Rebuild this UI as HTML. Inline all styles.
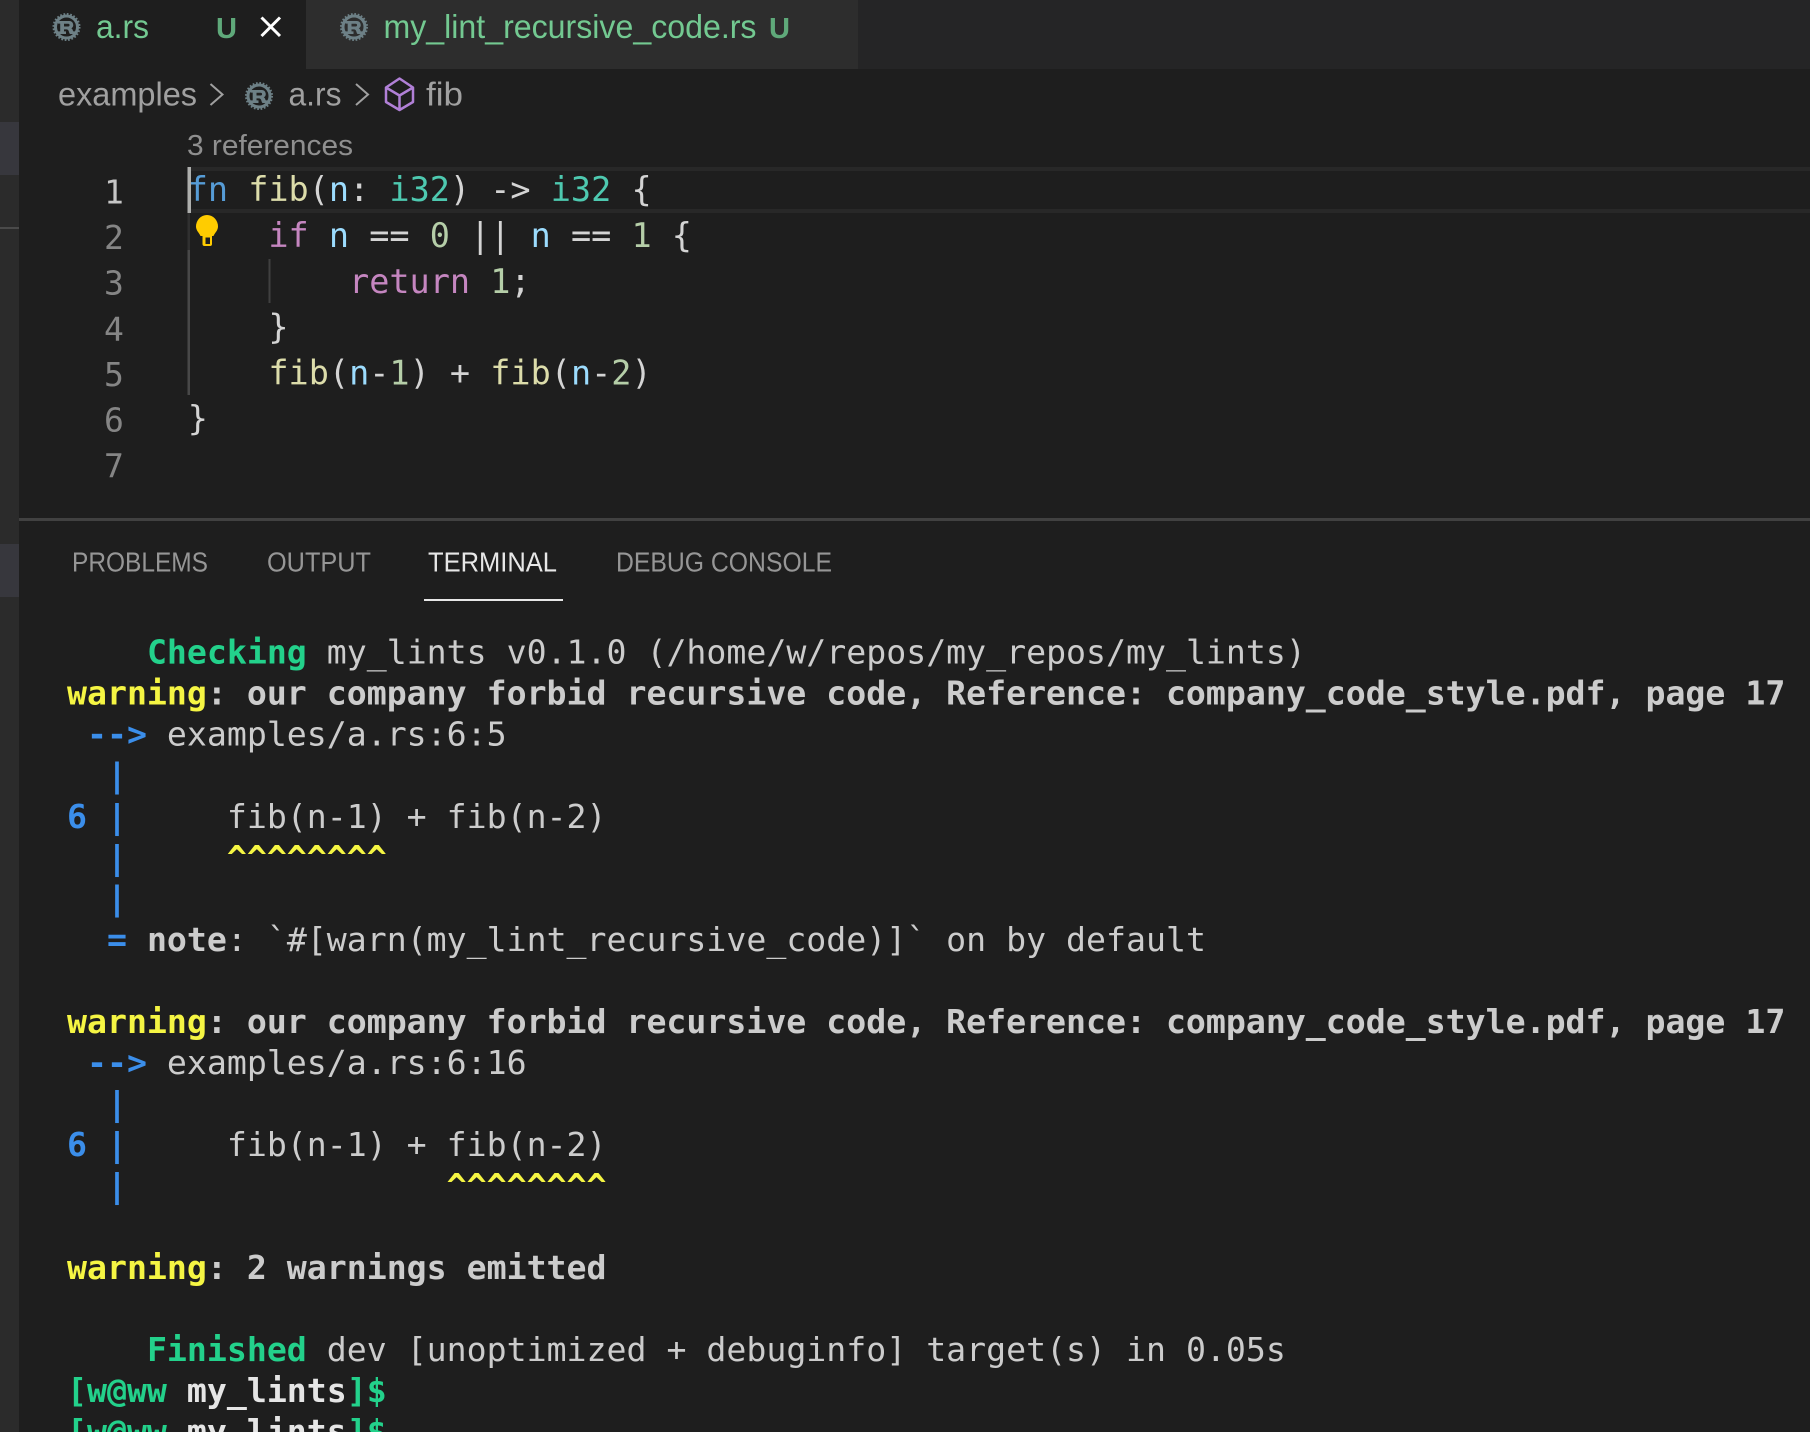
<!DOCTYPE html>
<html lang="en"><head><meta charset="utf-8"><title>a.rs</title>
<style>
html,body{margin:0;padding:0;background:#1e1e1e;width:1810px;height:1432px;overflow:hidden}
svg{display:block}
text{white-space:pre}
.ui{font-family:"Liberation Sans",sans-serif}
.code{font-family:"DejaVu Sans Mono",monospace;font-size:33.5px}
.ln{font-family:"DejaVu Sans Mono",monospace;font-size:33px;fill:#858585}
.t{font-family:"DejaVu Sans Mono",monospace;font-size:33.2px;fill:#cccccc}
.b{font-weight:bold}
.g{fill:#23d18b}.y{fill:#f5f543}.bl{fill:#3b8eea}
.k{fill:#569cd6}.f{fill:#dcdcaa}.v{fill:#9cdcfe}.ty{fill:#4ec9b0}.p{fill:#d4d4d4}.c{fill:#c586c0}.n{fill:#b5cea8}
</style></head><body>
<svg width="1810" height="1432" viewBox="0 0 1810 1432" xmlns="http://www.w3.org/2000/svg">
<defs>
<g id="rust">
<circle cx="14" cy="14" r="13" fill="none" stroke="#6d8086" stroke-width="2" stroke-dasharray="1.7 1.7"/>
<circle cx="14" cy="14" r="11" fill="none" stroke="#6d8086" stroke-width="3"/>
<path fill="#6d8086" fill-rule="evenodd" d="M5.500 8H17a4 4 0 0 1 1.800 7.400c1.500.6 1.400 2.200 2 3H23v2.600H17.500c-1.400-1-.6-4.200-3.300-4.600H11.500v2h2V21H5.500v-2.600h2.200V10.600H5.500ZM11.500 10.800v2.700h4.200a1.350 1.350 0 0 0 0-2.700Z"/>
</g>
</defs>
<rect width="1810" height="1432" fill="#1e1e1e"/>
<!-- activity bar -->
<rect x="0" y="0" width="19" height="1432" fill="#2b2b2b"/>
<rect x="0" y="122" width="19" height="53" fill="#37373d"/>
<rect x="0" y="227" width="19" height="2" fill="#4a4a4a"/>
<rect x="0" y="544" width="19" height="53" fill="#37373d"/>
<!-- tab bar -->
<rect x="19" y="0" width="1791" height="69" fill="#252526"/>
<rect x="19" y="0" width="287" height="69" fill="#1e1e1e"/>
<rect x="306" y="0" width="552" height="69" fill="#2d2d2d"/>
<use href="#rust" x="52.5" y="13"/>
<text class="ui" x="96" y="38" font-size="33" fill="#73c991" textLength="53" lengthAdjust="spacingAndGlyphs">a.rs</text>
<text class="ui b" x="216" y="38" font-size="29" fill="#5fa97a" textLength="21" lengthAdjust="spacingAndGlyphs">U</text>
<path d="M261.500 17.500L280 36M280 17.500L261.500 36" stroke="#fff" stroke-width="3" fill="none"/>
<use href="#rust" x="340" y="13"/>
<text class="ui" x="383.500" y="38" font-size="33" fill="#73c991" textLength="373" lengthAdjust="spacingAndGlyphs">my_lint_recursive_code.rs</text>
<text class="ui b" x="769" y="38" font-size="29" fill="#5fa97a" textLength="21" lengthAdjust="spacingAndGlyphs">U</text>
<!-- breadcrumbs -->
<text class="ui" x="58" y="105.500" font-size="33" fill="#a0a0a0" textLength="139" lengthAdjust="spacingAndGlyphs">examples</text>
<path d="M210.500 84L222.500 94.500L210.500 105" stroke="#a0a0a0" stroke-width="2" fill="none"/>
<use href="#rust" x="245" y="82"/>
<text class="ui" x="288.500" y="105.500" font-size="33" fill="#a0a0a0" textLength="53" lengthAdjust="spacingAndGlyphs">a.rs</text>
<path d="M356 84L368 94.500L356 105" stroke="#a0a0a0" stroke-width="2" fill="none"/>
<path d="M399.500 78.500L413 87.500V102L399.500 110L386 102V87.500ZM386 87.500L399.500 95.500L413 87.500M399.500 95.500V110" stroke="#b180d7" stroke-width="2.500" fill="none" stroke-linejoin="round"/>
<text class="ui" x="426" y="105.500" font-size="33" fill="#a0a0a0" textLength="37" lengthAdjust="spacingAndGlyphs">fib</text>
<!-- codelens -->
<text class="ui" x="187" y="155" font-size="29" fill="#8f8f8f" textLength="166" lengthAdjust="spacingAndGlyphs">3 references</text>
<!-- line highlight -->
<rect x="188" y="167" width="1622" height="4" fill="#282828"/>
<rect x="188" y="209" width="1622" height="4" fill="#282828"/>
<!-- guides -->
<rect x="187.500" y="213" width="2.500" height="37" fill="#303030"/>
<rect x="187.500" y="250" width="2.500" height="145" fill="#484848"/>
<rect x="268.500" y="259" width="2" height="44" fill="#404040"/>
<!-- bulb -->
<path d="M207 215a11 11.500 0 0 1 11 11.500c0 4-3 6-4.500 9.500h-13c-1.500-3.500-4.500-5.500-4.500-9.500a11 11.500 0 0 1 11-11.500Z" fill="#ffcc00"/>
<path d="M202.500 235H212V244a2 2 0 0 1-2 2H204.500a2 2 0 0 1-2-2Z" fill="#ffcc00"/>
<rect x="205.500" y="237.500" width="4.500" height="6.500" fill="#1e1e1e"/>
<!-- line numbers -->
<text class="ln" x="104" y="203.300" style="fill:#c6c6c6">1</text>
<text class="ln" x="104" y="249">2</text>
<text class="ln" x="104" y="294.700">3</text>
<text class="ln" x="104" y="340.400">4</text>
<text class="ln" x="104" y="386">5</text>
<text class="ln" x="104" y="431.700">6</text>
<text class="ln" x="104" y="477.400">7</text>
<!-- code -->
<text class="code" x="187.700" y="200.900"><tspan class="k">fn</tspan> <tspan class="f">fib</tspan><tspan class="p">(</tspan><tspan class="v">n</tspan><tspan class="p">: </tspan><tspan class="ty">i32</tspan><tspan class="p">) -&gt; </tspan><tspan class="ty">i32</tspan><tspan class="p"> {</tspan></text>
<text class="code" x="187.700" y="247">    <tspan class="c">if</tspan> <tspan class="v">n</tspan><tspan class="p"> == </tspan><tspan class="n">0</tspan><tspan class="p"> || </tspan><tspan class="v">n</tspan><tspan class="p"> == </tspan><tspan class="n">1</tspan><tspan class="p"> {</tspan></text>
<text class="code" x="187.700" y="292.800">        <tspan class="c">return</tspan> <tspan class="n">1</tspan><tspan class="p">;</tspan></text>
<text class="code" x="187.700" y="338.400">    <tspan class="p">}</tspan></text>
<text class="code" x="187.700" y="384.300">    <tspan class="f">fib</tspan><tspan class="p">(</tspan><tspan class="v">n</tspan><tspan class="p">-</tspan><tspan class="n">1</tspan><tspan class="p">) + </tspan><tspan class="f">fib</tspan><tspan class="p">(</tspan><tspan class="v">n</tspan><tspan class="p">-</tspan><tspan class="n">2</tspan><tspan class="p">)</tspan></text>
<text class="code" x="187.700" y="430"><tspan class="p">}</tspan></text>
<!-- cursor -->
<rect x="187.500" y="167" width="3.500" height="46" fill="#aeafad"/>
<!-- panel -->
<rect x="19" y="518" width="1791" height="3" fill="#414141"/>
<text class="ui" x="72" y="571.500" font-size="27.500" fill="#969696" textLength="136" lengthAdjust="spacingAndGlyphs">PROBLEMS</text>
<text class="ui" x="267" y="571.500" font-size="27.500" fill="#969696" textLength="104" lengthAdjust="spacingAndGlyphs">OUTPUT</text>
<text class="ui" x="428" y="571.500" font-size="27.500" fill="#e7e7e7" textLength="129" lengthAdjust="spacingAndGlyphs">TERMINAL</text>
<rect x="424" y="599" width="139" height="2" fill="#e7e7e7"/>
<text class="ui" x="616" y="571.500" font-size="27.500" fill="#969696" textLength="216" lengthAdjust="spacingAndGlyphs">DEBUG CONSOLE</text>
<!-- terminal -->
<text class="t" x="67" y="663.700">    <tspan class="b g">Checking</tspan> my_lints v0.1.0 (/home/w/repos/my_repos/my_lints)</text>
<text class="t b" x="67" y="704.700"><tspan class="y">warning</tspan>: our company forbid recursive code, Reference: company_code_style.pdf, page 17</text>
<text class="t" x="67" y="745.700"> <tspan class="b bl">--&gt;</tspan> examples/a.rs:6:5</text>
<text class="t b bl" x="67" y="786.500">  |</text>
<text class="t" x="67" y="827.900"><tspan class="b bl">6 |</tspan>     fib(n-1) + fib(n-2)</text>
<text class="t b bl" x="67" y="868.800">  |     <tspan class="y">^^^^^^^^</tspan></text>
<text class="t b bl" x="67" y="909.600">  |</text>
<text class="t" x="67" y="951">  <tspan class="b bl">=</tspan> <tspan class="b">note</tspan>: `#[warn(my_lint_recursive_code)]` on by default</text>
<text class="t b" x="67" y="1033"><tspan class="y">warning</tspan>: our company forbid recursive code, Reference: company_code_style.pdf, page 17</text>
<text class="t" x="67" y="1074"> <tspan class="b bl">--&gt;</tspan> examples/a.rs:6:16</text>
<text class="t b bl" x="67" y="1114.800">  |</text>
<text class="t" x="67" y="1156.200"><tspan class="b bl">6 |</tspan>     fib(n-1) + fib(n-2)</text>
<text class="t b bl" x="67" y="1197">  |                <tspan class="y">^^^^^^^^</tspan></text>
<text class="t b" x="67" y="1279"><tspan class="y">warning</tspan>: 2 warnings emitted</text>
<text class="t" x="67" y="1361.100">    <tspan class="b g">Finished</tspan> dev [unoptimized + debuginfo] target(s) in 0.05s</text>
<text class="t b" x="67" y="1402"><tspan class="g">[w@ww</tspan> <tspan style="fill:#e5e5e5">my_lints</tspan><tspan class="g">]$</tspan></text>
<text class="t b" x="67" y="1443"><tspan class="g">[w@ww</tspan> <tspan style="fill:#e5e5e5">my_lints</tspan><tspan class="g">]$</tspan></text>
</svg>
</body></html>
